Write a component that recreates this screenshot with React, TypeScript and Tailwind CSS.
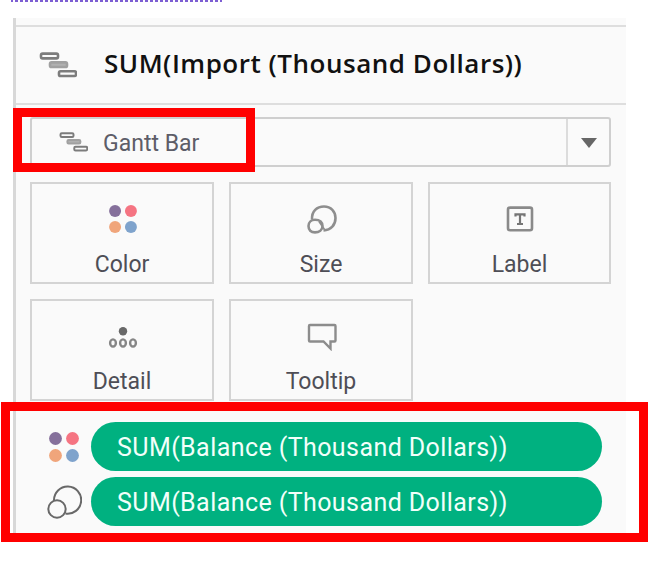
import type { ReactNode } from "react";

function GanttIcon({ className }: { className: string }) {
  return (
    <svg viewBox="0 0 38 26" className={className} fill="none" stroke="#7c7c7c" strokeWidth="2.6">
      <rect x="2" y="1.6" width="17" height="4.8" rx="1.6" />
      <rect x="11" y="10.4" width="17" height="4.6" rx="1.6" fill="#b0b0b0" stroke="#a0a0a0" />
      <rect x="20" y="19.2" width="17" height="4.8" rx="1.6" />
    </svg>
  );
}

function ColorIcon({ className }: { className: string }) {
  return (
    <svg viewBox="0 0 30 30" className={className}>
      <circle cx="6.5" cy="6.5" r="6.4" fill="#85709b" />
      <circle cx="23.5" cy="6.5" r="6.4" fill="#f57482" />
      <circle cx="6.5" cy="23.5" r="6.4" fill="#f0a57b" />
      <circle cx="23.5" cy="23.5" r="6.4" fill="#7fa3cc" />
    </svg>
  );
}

function SizeIcon() {
  return (
    <svg viewBox="0 0 35 34" className="h-[34px] w-[35px]" fill="none" stroke="#686868" strokeWidth="2">
      <path d="M7 15.5A13.6 13.6 0 1 1 18.5 28.6" />
      <circle cx="10" cy="24" r="8.7" />
    </svg>
  );
}

function SizeCardIcon() {
  return (
    <svg viewBox="0 0 30 29" className="h-[29px] w-[30px]" fill="none" stroke="#8e8e8e" strokeWidth="2.6">
      <path d="M5 14.5C4.5 6 10 1.5 17 1.5C24 1.5 28.5 6.5 28.5 13C28.5 20 24 25 16.5 25.5" />
      <path d="M8 14.8C13 14.8 15.5 17.5 15.5 21C15.5 25 12 27.4 8 27.4C4 27.4 1.5 25 1.5 21C1.5 17.5 4 14.8 8 14.8Z" />
      <path d="M12 16.5L17.5 24.5" strokeWidth="1.6" />
    </svg>
  );
}

function LabelIcon() {
  return (
    <svg viewBox="0 0 28 26" className="mr-[2px] h-[26px] w-[28px]" fill="none" stroke="#8a8a8a" strokeWidth="2.6">
      <rect x="2" y="1.6" width="24" height="22.6" rx="2" />
      <path d="M9.5 10.5V8.3h9V10.5M14 8.5v9M11 18h6" stroke="#757575" strokeWidth="2.2" />
    </svg>
  );
}

function DetailIcon() {
  return (
    <svg viewBox="0 0 30 24" className="mt-[3px] h-[24px] w-[30px]" fill="none" stroke="#868686" strokeWidth="2.4">
      <circle cx="15" cy="5.2" r="4.2" fill="#686868" stroke="none" />
      <ellipse cx="5" cy="17" rx="2.9" ry="3.6" />
      <ellipse cx="15" cy="17" rx="2.9" ry="3.6" />
      <ellipse cx="25" cy="17" rx="2.9" ry="3.6" />
    </svg>
  );
}

function TooltipIcon() {
  return (
    <svg viewBox="0 0 30 28" className="mt-[2px] h-[28px] w-[30px]" fill="none" stroke="#8c8c8c" strokeWidth="2.4">
      <path d="M3 2h24.5Q28.500 2 28.500 3v14.500Q28.500 18.500 27.500 18.500H23.500v7L16.500 18.500H3Q2 18.500 2 17.500V3Q2 2 3 2Z" />
    </svg>
  );
}

function Card({ icon, label }: { icon: ReactNode; label: string }) {
  return (
    <div className="flex h-[102px] flex-col items-center border-2 border-[#d4d4d4] pt-[19px]">
      <div className="flex h-[32px] items-center pl-[2px]">{icon}</div>
      <span className="mt-[15px] text-[23px] leading-[30px] text-[#4e4e56]">{label}</span>
    </div>
  );
}

function Pill({ icon }: { icon: ReactNode }) {
  return (
    <div className="flex h-[49px] items-center">
      <div className="flex w-[75px] shrink-0 items-center pl-[31px]">{icon}</div>
      <div className="flex h-[49px] w-[511px] items-center rounded-full bg-[#00b180] pt-[2px] pl-[26px] text-[25px] tracking-[0.42px] whitespace-nowrap text-[#f2fffa]">
        <span>SUM(Balance (Thousand Dollars))</span>
      </div>
    </div>
  );
}

export default function App() {
  return (
    <div className="relative h-[580px] w-[660px] overflow-hidden bg-white font-['Roboto',sans-serif]">
      <div className="ml-[11px] h-[2px] w-[211px] bg-[repeating-linear-gradient(90deg,#7d5fd3_0px,#7d5fd3_2px,#ffffff_2px,#ffffff_4px,#7d5fd3_4px,#7d5fd3_5px)]" />
      <main className="mt-[16px] ml-[13px] h-[523px] w-[613px] border-l-[3px] border-[#d8d8d8] bg-[#fafafa] pt-[7px]">
        <header className="flex h-[80px] items-center border-y-2 border-[#dedede] pl-[23px]">
          <GanttIcon className="mb-[1px] h-[26px] w-[38px]" />
          <h1 className="mb-[3px] ml-[27px] font-['Open_Sans',sans-serif] text-[26px] font-semibold tracking-[0.52px] whitespace-nowrap text-[#111]">
            SUM(Import (Thousand Dollars))
          </h1>
        </header>
        <div className="mt-[12px] ml-[14px] flex h-[50px] w-[581px] items-stretch rounded-[3px] border-2 border-[#cfcfcf]">
          <div className="flex flex-1 items-center pl-[27px]">
            <GanttIcon className="mb-[1px] h-[20px] w-[29px]" />
            <span className="mt-[4px] ml-[15px] text-[23px] text-[#5d5d68]">Gantt Bar</span>
          </div>
          <div className="flex w-[43px] items-center justify-center border-l-2 border-[#dcdcdc] pt-[2px]">
            <svg viewBox="0 0 16 10" className="h-[10px] w-[16px]">
              <path d="M0 0H16L8 10Z" fill="#666" />
            </svg>
          </div>
        </div>
        <div className="mt-[15px] ml-[14px] grid grid-cols-[184px_184px_183px] gap-[15px]">
          <Card icon={<ColorIcon className="size-[28px]" />} label="Color" />
          <Card icon={<SizeCardIcon />} label="Size" />
          <Card icon={<LabelIcon />} label="Label" />
          <Card icon={<DetailIcon />} label="Detail" />
          <Card icon={<TooltipIcon />} label="Tooltip" />
        </div>
        <div className="mt-[21px] flex flex-col gap-[6px]">
          <Pill icon={<ColorIcon className="ml-[2px] size-[30px]" />} />
          <Pill icon={<SizeIcon />} />
        </div>
      </main>
      <div className="absolute top-[108px] left-[13px] h-[64px] w-[242px] border-[9px] border-[#ff0000]" />
      <div className="absolute top-[402px] left-[1px] h-[140px] w-[647px] border-[9px] border-[#ff0000]" />
    </div>
  );
}
